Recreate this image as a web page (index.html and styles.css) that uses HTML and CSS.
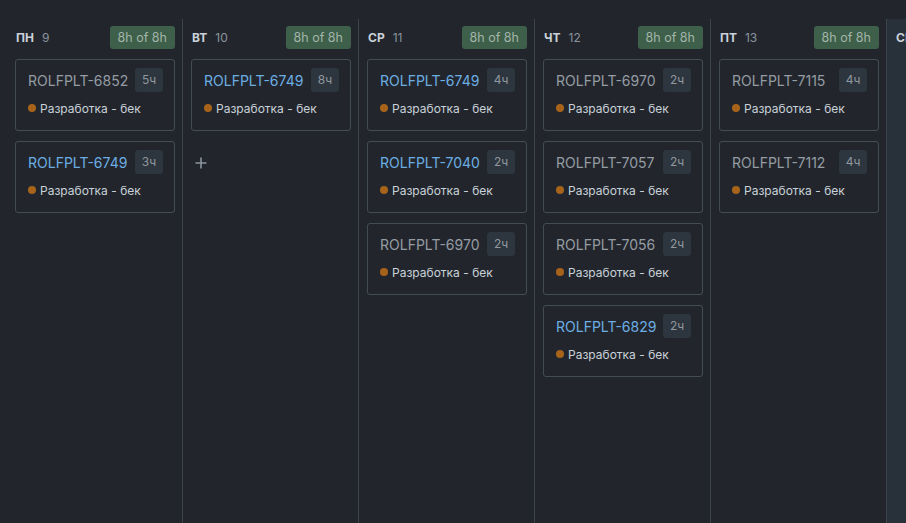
FILE: index.html
```html
<!DOCTYPE html>
<html lang="ru">
<head>
<meta charset="utf-8">
<link rel="stylesheet" href="styles.css">
</head>
<body>
<div class="board">
  <section class="col">
    <header class="col-head"><span class="day">ПН</span><span class="num">9</span><span class="total">8h of 8h</span></header>
    <div class="cards">
      <div class="card"><div class="row1"><span class="key">ROLFPLT-6852</span><span class="hours">5ч</span></div><div class="row2"><span class="dot"></span>Разработка - бек</div></div>
      <div class="card"><div class="row1"><span class="key blue">ROLFPLT-6749</span><span class="hours">3ч</span></div><div class="row2"><span class="dot"></span>Разработка - бек</div></div>
    </div>
  </section>
  <section class="col">
    <header class="col-head"><span class="day">ВТ</span><span class="num">10</span><span class="total">8h of 8h</span></header>
    <div class="cards">
      <div class="card"><div class="row1"><span class="key blue">ROLFPLT-6749</span><span class="hours">8ч</span></div><div class="row2"><span class="dot"></span>Разработка - бек</div></div>
      <div class="add"><svg width="12" height="12" viewBox="0 0 12 12"><path d="M6 0.5V11.5M0.5 6H11.5" stroke="#8b949e" stroke-width="1.6"/></svg></div>
    </div>
  </section>
  <section class="col">
    <header class="col-head"><span class="day">СР</span><span class="num">11</span><span class="total">8h of 8h</span></header>
    <div class="cards">
      <div class="card"><div class="row1"><span class="key blue">ROLFPLT-6749</span><span class="hours">4ч</span></div><div class="row2"><span class="dot"></span>Разработка - бек</div></div>
      <div class="card"><div class="row1"><span class="key blue">ROLFPLT-7040</span><span class="hours">2ч</span></div><div class="row2"><span class="dot"></span>Разработка - бек</div></div>
      <div class="card"><div class="row1"><span class="key">ROLFPLT-6970</span><span class="hours">2ч</span></div><div class="row2"><span class="dot"></span>Разработка - бек</div></div>
    </div>
  </section>
  <section class="col">
    <header class="col-head"><span class="day">ЧТ</span><span class="num">12</span><span class="total">8h of 8h</span></header>
    <div class="cards">
      <div class="card"><div class="row1"><span class="key">ROLFPLT-6970</span><span class="hours">2ч</span></div><div class="row2"><span class="dot"></span>Разработка - бек</div></div>
      <div class="card"><div class="row1"><span class="key">ROLFPLT-7057</span><span class="hours">2ч</span></div><div class="row2"><span class="dot"></span>Разработка - бек</div></div>
      <div class="card"><div class="row1"><span class="key">ROLFPLT-7056</span><span class="hours">2ч</span></div><div class="row2"><span class="dot"></span>Разработка - бек</div></div>
      <div class="card"><div class="row1"><span class="key blue">ROLFPLT-6829</span><span class="hours">2ч</span></div><div class="row2"><span class="dot"></span>Разработка - бек</div></div>
    </div>
  </section>
  <section class="col">
    <header class="col-head"><span class="day">ПТ</span><span class="num">13</span><span class="total">8h of 8h</span></header>
    <div class="cards">
      <div class="card"><div class="row1"><span class="key">ROLFPLT-7115</span><span class="hours">4ч</span></div><div class="row2"><span class="dot"></span>Разработка - бек</div></div>
      <div class="card"><div class="row1"><span class="key">ROLFPLT-7112</span><span class="hours">4ч</span></div><div class="row2"><span class="dot"></span>Разработка - бек</div></div>
    </div>
  </section>
  <section class="col weekend">
    <header class="col-head"><span class="day">СБ</span><span class="num">14</span></header>
  </section>
</div>
</body>
</html>
```
FILE: styles.css
```css
html, body {
  margin: 0;
  padding: 0;
  background: #22262c;
  height: 100%;
  overflow: hidden;
}
body {
  font-family: Inter, "Noto Sans", sans-serif;
  color: #c9d1d9;
}
.board {
  display: flex;
  padding-left: 7px;
  padding-top: 19px;
  height: 100%;
  box-sizing: border-box;
}
.col {
  flex: 0 0 175.75px;
  box-sizing: border-box;
  border-right: 1px solid #3c434b;
  padding: 0 7px 0 8px;
}
.col.weekend {
  background: #283039;
  border-right: none;
  flex: 0 0 190px;
}
.col-head {
  display: flex;
  align-items: center;
  height: 23px;
  margin-top: 7px;
  font-size: 12px;
}
.day {
  font-weight: 700;
  color: #c9d1d9;
  margin-right: 8px;
  margin-left: 1px;
}
.num {
  color: #8b949e;
}
.total {
  margin-left: auto;
  background: #3e5f49;
  color: #a3b5a9;
  font-size: 12.5px;
  height: 23px;
  line-height: 23px;
  padding: 0 8px;
  border-radius: 3px;
}
.cards {
  display: flex;
  flex-direction: column;
  gap: 10px;
  margin-top: 10px;
}
.card {
  box-sizing: border-box;
  width: 160px;
  height: 72px;
  border: 1px solid #444c56;
  border-radius: 3px;
  padding: 8px 11px 0 12px;
}
.row1 {
  display: flex;
  align-items: center;
  justify-content: space-between;
  height: 24px;
}
.key {
  font-size: 14px;
  color: #959ca4;
}
.key.blue {
  color: #6caee4;
}
.hours {
  width: 28px;
  height: 24px;
  line-height: 23px;
  text-align: center;
  background: #2d353e;
  color: #8f979f;
  font-size: 12px;
  border-radius: 3px;
}
.row2 {
  display: flex;
  align-items: center;
  margin-top: 9px;
  font-size: 12px;
  color: #c9d1d9;
  height: 14px;
}
.dot {
  width: 8px;
  height: 8px;
  border-radius: 50%;
  background: #a8631a;
  margin-right: 4px;
}
.add {
  display: flex;
  align-items: center;
  justify-content: center;
  width: 20px;
  height: 20px;
  margin-top: 12px;
}
```
